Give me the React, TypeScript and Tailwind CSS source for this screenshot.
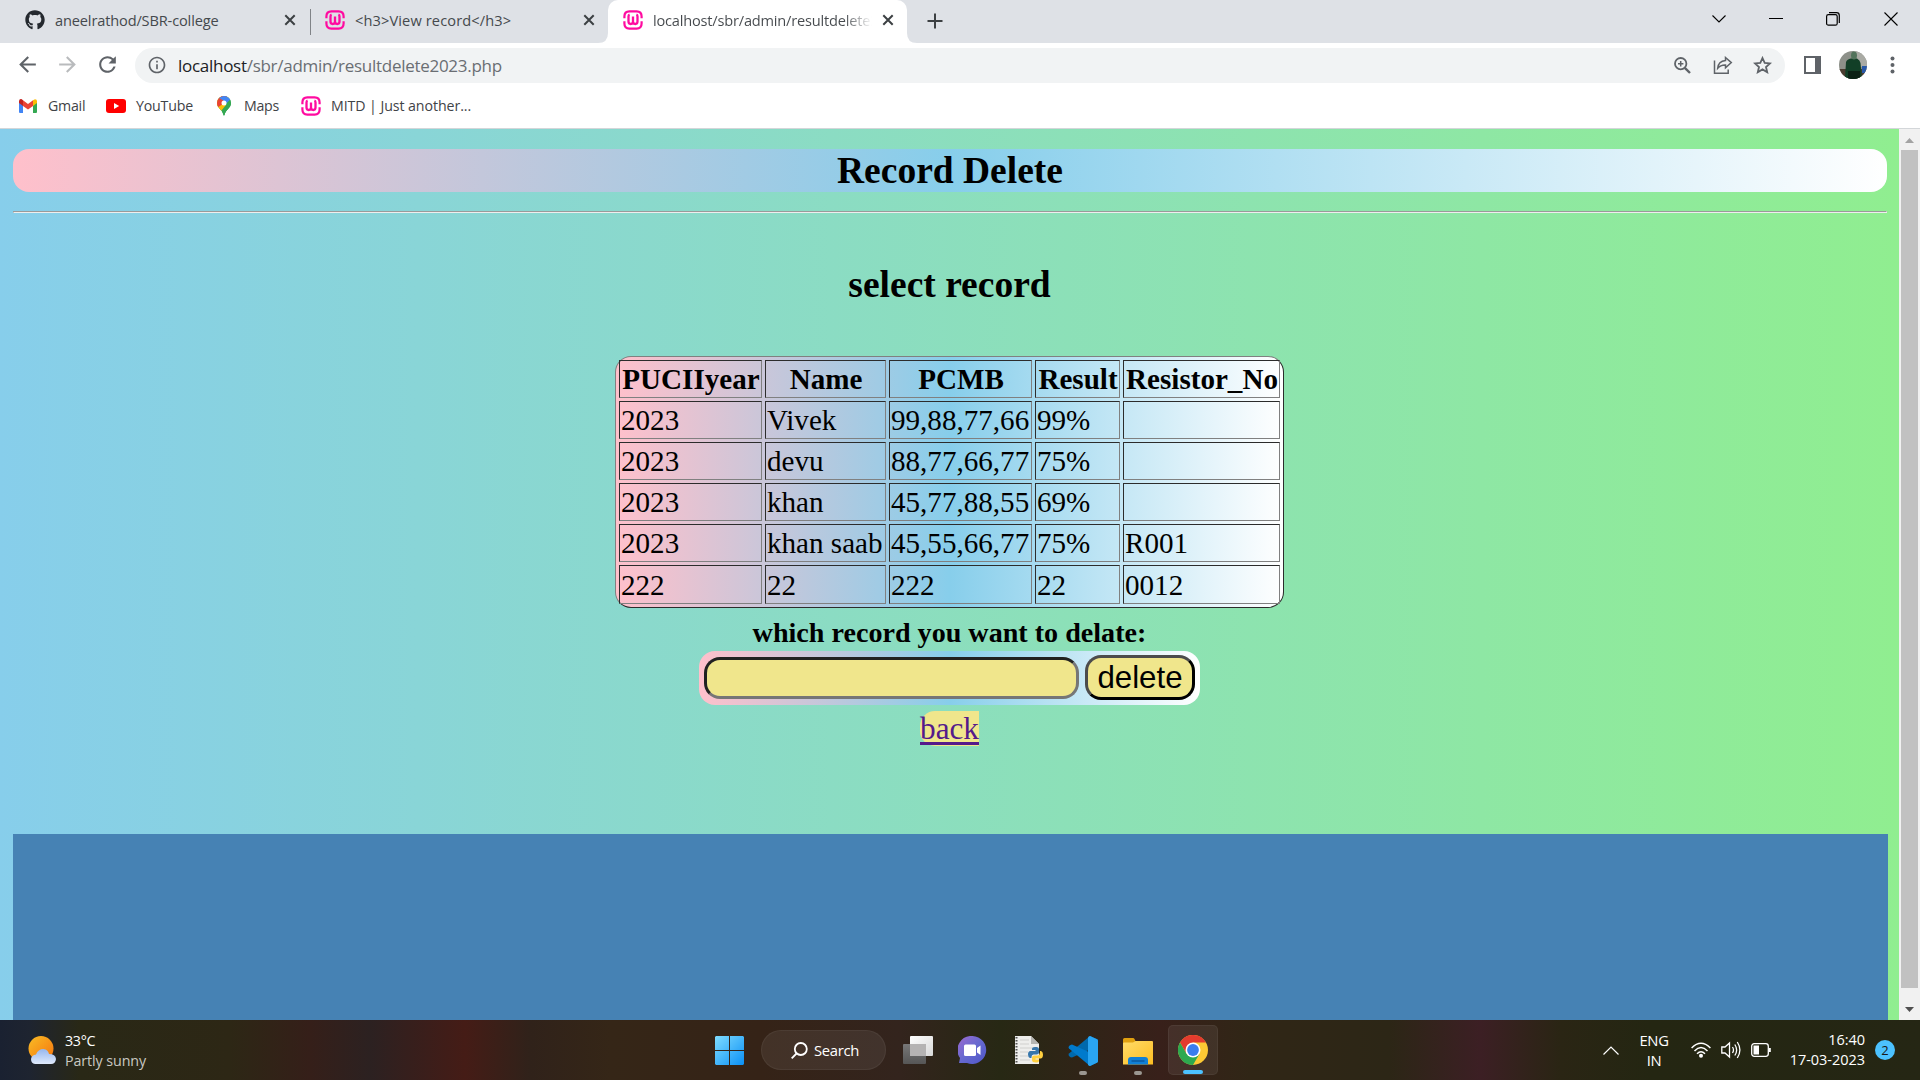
import React from "react";
import { FaGithub } from "react-icons/fa";
import { MdArrowBack, MdArrowForward, MdRefresh, MdInfoOutline } from "react-icons/md";

const UI = "font-['Open_Sans','Noto_Sans',sans-serif]";
const SERIF = "font-['Liberation_Serif',serif]";

function WampIcon() {
  return (
    <svg className="block shrink-0" width="20" height="20" viewBox="0 0 20 20" fill="none" stroke="#ff0ba0">
      <path d="M1.4 8.2V6.400Q1.400 1.400 6.400 1.400H13.600Q18.600 1.400 18.600 6.400V8.200M1.400 11.200V13.600Q1.400 18.600 6.400 18.600H13.600Q18.600 18.600 18.600 13.600V11.200" strokeWidth="2.2" />
      <path d="M6.6 4.600Q5.500 5 5.500 6.500V11.600Q5.500 14 7.700 14Q10 14 10 11.600V6.500M10 11.600Q10 14 12.300 14Q14.500 14 14.500 11.600V6.500Q14.500 5 13.400 4.600" strokeWidth="2.300" />
    </svg>
  );
}

function CloseX() {
  return (
    <svg className="block shrink-0" width="12" height="12" viewBox="0 0 12 12" stroke="#3c4043" strokeWidth="2">
      <path d="M1.3 1.3L10.7 10.7M10.7 1.3L1.3 10.7" />
    </svg>
  );
}

function TabStrip() {
  return (
    <div className={"flex h-[43px] bg-[#dee1e6] text-[14.6px] leading-[34px] text-[#45494d] " + UI}>
      <div className="flex h-[41px] w-[310px] items-center pb-px pl-[25px]">
        <FaGithub className="shrink-0 text-[#24292f]" size={20} />
        <span className="ml-2.5 w-[229px] whitespace-nowrap tracking-[-0.15px]">aneelrathod/SBR-college</span>
        <CloseX />
      </div>
      <div className="mt-[9px] h-[26px] w-px shrink-0 bg-[#808387]" />
      <div className="flex h-[41px] w-[297px] items-center pb-px pl-[14px]">
        <WampIcon />
        <span className="ml-2.5 w-[228px] whitespace-nowrap tracking-[0.12px]">&lt;h3&gt;View record&lt;/h3&gt;</span>
        <CloseX />
      </div>
      <svg className="-ml-2.5 mt-[33px] block shrink-0" width="10" height="10" viewBox="0 0 10 10" fill="#fff"><path d="M10 0V10H0Q10 10 10 0Z" /></svg>
      <div className="flex h-[43px] w-[299px] items-center rounded-t-[10px] bg-white pb-[3px] pl-[15px]">
        <WampIcon />
        <span className="ml-[10px] mr-[10px] w-[219px] overflow-hidden whitespace-nowrap bg-[linear-gradient(to_right,#45494d_87%,transparent_100%)] bg-clip-text tracking-[-0.2px] text-transparent">localhost/sbr/admin/resultdelete2</span>
        <CloseX />
      </div>
      <svg className="mt-[33px] block shrink-0" width="10" height="10" viewBox="0 0 10 10" fill="#fff"><path d="M0 0V10H10Q0 10 0 0Z" /></svg>
      <svg className="ml-[10px] mt-[13px] block shrink-0" width="16" height="16" viewBox="0 0 16 16" stroke="#3c4043" strokeWidth="2"><path d="M8 .5V15.5M.5 8H15.5" /></svg>
      <div className="ml-auto flex h-[37px] items-center pr-[22px] text-black">
        <svg width="14" height="8" viewBox="0 0 14 8" fill="none" stroke="currentColor" strokeWidth="1.1"><path d="M.5.5L7 7L13.5.5" /></svg>
        <svg className="ml-[43px]" width="14" height="2" viewBox="0 0 14 2"><path d="M0 .5H14" stroke="currentColor" /></svg>
        <svg className="ml-[43px]" width="14" height="14" viewBox="0 0 14 14" fill="none" stroke="currentColor" strokeWidth="1.2"><rect x=".6" y="2.6" width="10.6" height="10.6" rx="1.8" /><path d="M3 .7H10.5Q13.3.7 13.3 3.5V11" /></svg>
        <svg className="ml-[44px]" width="14" height="14" viewBox="0 0 14 14" stroke="currentColor" strokeWidth="1.1"><path d="M.5.5L13.5 13.5M13.5.5L.5 13.5" /></svg>
      </div>
    </div>
  );
}

function Toolbar() {
  return (
    <div className={"flex h-[43px] items-center bg-white pt-px text-[#5f6368] " + UI}>
      <MdArrowBack size={25} className="-mt-px ml-[15px]" />
      <MdArrowForward size={25} className="-mt-px ml-[15px] text-[#b9bbbd]" />
      <MdRefresh size={25} className="-mt-px ml-[15px]" />
      <div className="ml-[15px] flex h-[35px] w-[1650px] items-center rounded-full bg-[#f1f3f4] pl-[12px] pr-[13px]">
        <MdInfoOutline size={20} />
        <span className="ml-[11px] whitespace-nowrap pt-px text-[17px] tracking-[-0.28px] text-[#6a6e73]"><span className="text-[#202124]">localhost</span>/sbr/admin/resultdelete2023.php</span>
        <svg className="ml-auto" width="17" height="17" viewBox="0 0 17 17" fill="none" stroke="currentColor">
          <circle cx="6.700" cy="6.700" r="5.700" strokeWidth="1.800" />
          <path d="M10.800 10.800L16 16" strokeWidth="2.400" />
          <path d="M6.700 4V9.400M4 6.700H9.400" strokeWidth="1.500" />
        </svg>
        <svg className="ml-[22px]" width="20" height="19" viewBox="0 0 20 19" fill="none" stroke="currentColor" strokeWidth="1.5">
          <path d="M1.5 4.5V17.2H15.2V13.5" />
          <path d="M12.5 1.5L18.3 6.6L12.5 11.8V8.9Q7.5 8.7 4.7 12.2Q5.3 5.2 12.5 4.5Z" />
        </svg>
        <svg className="ml-[20px]" width="19" height="18" viewBox="0 0 19 18" fill="none" stroke="currentColor" strokeWidth="1.800">
          <path d="M9.500 2L11.700 6.900L17 7.400L13 11L14.200 16.200L9.500 13.400L4.800 16.200L6 11L2 7.400L7.300 6.900Z" />
        </svg>
      </div>
      <svg className="ml-[19px]" width="17" height="18" viewBox="0 0 17 18"><path d="M1 1H16V17H1Z" fill="#fff" stroke="#5f6368" strokeWidth="2" /><path d="M11 0H17V18H11Z" fill="#5f6368" /></svg>
      <svg className="ml-[18px]" width="28" height="28" viewBox="0 0 28 28">
        <defs><clipPath id="avatar"><circle cx="14" cy="14" r="14" /></clipPath></defs>
        <g clipPath="url(#avatar)">
          <path d="M0 0H28V28H0Z" fill="#8d9089" />
          <path d="M0 18H28V28H0Z" fill="#4a3c30" />
          <path d="M15 0H20L28 7V16H20Z" fill="#a9aaa4" />
          <path d="M23 15H28V22H23Z" fill="#2858a8" />
          <path d="M6 27L7 11Q8 8 12 7.5H18Q21 9 21.5 12L23 28H6Z" fill="#123f27" />
          <path d="M9 20H21V28H9Z" fill="#0b2115" />
          <ellipse cx="15" cy="4.5" rx="3" ry="4" fill="#52735b" />
        </g>
      </svg>
      <svg className="ml-[23px]" width="5" height="18" viewBox="0 0 5 18" fill="#5f6368"><circle cx="2.5" cy="2.5" r="2" /><circle cx="2.5" cy="9" r="2" /><circle cx="2.5" cy="15.5" r="2" /></svg>
    </div>
  );
}

function Bookmarks() {
  return (
    <div className={"flex h-[43px] items-center whitespace-nowrap border-b border-[#d3d6d9] bg-white pb-[2px] pl-[19px] text-[14.2px] text-[#3f4347] " + UI}>
      <svg width="18" height="14" viewBox="0 0 18 14">
        <path d="M0 2V13Q0 14 1 14H4V5Z" fill="#4285f4" />
        <path d="M18 2V13Q18 14 17 14H14V5Z" fill="#34a853" />
        <path d="M14 1.2L16 .2Q18 .3 18 2V4L14 7Z" fill="#fbbc04" />
        <path d="M4 1.2L9 5L14 1.2V7L9 10.6L4 7Z" fill="#ea4335" />
        <path d="M4 7L0 4V2Q.2-.2 2.4.1L4 1.2Z" fill="#c5221f" />
      </svg>
      <span className="ml-[11px] w-[58px] tracking-[-0.25px]">Gmail</span>
      <svg width="20" height="14" viewBox="0 0 20 14"><rect width="20" height="14" rx="3" fill="#f00" /><path d="M8 4L13.2 7L8 10Z" fill="#fff" /></svg>
      <span className="ml-[10px] w-[81px] tracking-[-0.2px]">YouTube</span>
      <svg width="14" height="20" viewBox="0 0 14 20">
        <defs><clipPath id="pin"><path d="M7 0A7 7 0 0 1 14 7C14 12 9 13 7.5 19Q7 20 6.5 19C5 13 0 12 0 7A7 7 0 0 1 7 0Z" /></clipPath></defs>
        <g clipPath="url(#pin)"><path d="M0 0H14V20H0Z" fill="#34a853" /><path d="M0 0H14L3 13L0 12Z" fill="#fbbc04" /><path d="M0 0H10L7 7L0 12Z" fill="#ea4335" /><path d="M2 2L9-2L14 3L7 10L7 5Z" fill="#4285f4" /><path d="M7 10L14 3V12L7 20H4Z" fill="#34a853" /><path d="M2 12L7 7L9 9L4 15Z" fill="#fbbc04" /></g>
        <circle cx="7" cy="7" r="2.5" fill="#fff" />
      </svg>
      <span className="ml-[13px] w-[57px] tracking-[-0.3px]">Maps</span>
      <WampIcon />
      <span className="ml-[10px] tracking-[-0.08px]">MITD | Just another...</span>
    </div>
  );
}

const HEADERS = ["PUCIIyear", "Name", "PCMB", "Result", "Resistor_No"];
const ROWS = [
  ["2023", "Vivek", "99,88,77,66", "99%", ""],
  ["2023", "devu", "88,77,66,77", "75%", ""],
  ["2023", "khan", "45,77,88,55", "69%", ""],
  ["2023", "khan saab", "45,55,66,77", "75%", "R001"],
  ["222", "22", "222", "22", "0012"],
];
const CELL = "whitespace-nowrap border border-b-[#808080] border-l-[#2c2c2c] border-r-[#808080] border-t-[#2c2c2c] pb-0 pl-px pr-0 pt-px leading-[33px]";

function RecordTable() {
  return (
    <table className="w-[669px] table-fixed border-separate border-spacing-[3px] rounded-[16px] border border-b-[#2c2c2c] border-l-[#808080] border-r-[#2c2c2c] border-t-[#808080] bg-[linear-gradient(to_right,pink,skyblue,white)] text-[29.1px]">
      <colgroup>
        <col className="w-[143px]" /><col className="w-[121px]" /><col className="w-[143px]" /><col className="w-[85px]" /><col className="w-[157px]" />
      </colgroup>
      <thead>
        <tr>{HEADERS.map((h) => <th key={h} className={CELL + " h-[38px] text-center font-bold"}>{h}</th>)}</tr>
      </thead>
      <tbody>
        {ROWS.map((row, i) => (
          <tr key={i}>
            {row.map((c, j) => <td key={j} className={CELL + (i === ROWS.length - 1 ? " h-[39px]" : " h-[38px]")}>{c}</td>)}
          </tr>
        ))}
      </tbody>
    </table>
  );
}

function Page() {
  return (
    <div className={"flex h-[891px] w-[1899px] flex-col items-center overflow-hidden bg-[linear-gradient(to_right,skyblue,lightgreen)] pl-px text-black " + SERIF}>
      <h1 className="mt-5 h-[43px] w-[1874px] shrink-0 rounded-[16px] bg-[linear-gradient(to_right,pink,skyblue,white)] text-center text-[37.5px] font-bold leading-[43px]">Record Delete</h1>
      <hr className="mt-[19px] h-[2px] w-[1874px] shrink-0 border border-b-[#eeeeee] border-l-[#9a9a9a] border-r-[#eeeeee] border-t-[#9a9a9a]" />
      <h1 className="mr-px mt-[50px] h-[43px] shrink-0 text-[37.5px] font-bold leading-[43px]">select record</h1>
      <div className="mr-px mt-[50px] h-[252px] shrink-0"><RecordTable /></div>
      <div className="mr-px mt-[8px] h-[35px] shrink-0 text-[28.125px] font-bold leading-[34px]">which record you want to delate:</div>
      <form className="mr-px flex h-[54px] w-[501px] shrink-0 rounded-[16px] bg-[linear-gradient(to_right,pink,skyblue,white)] pl-[5px]">
        <div className="mt-[6px] h-[42px] w-[375px] rounded-[16px] border-[3px] border-b-[#767676] border-l-[#212121] border-r-[#767676] border-t-[#212121] bg-[#f0e68c]" />
        <button type="button" className="ml-[6px] mt-[4px] h-[45px] w-[110px] rounded-[16px] border-[3px] border-b-black border-l-[#4c4c4c] border-r-black border-t-[#4c4c4c] bg-[#f0e68c] font-['Liberation_Sans',sans-serif] text-[31.25px] leading-[39px]">delete</button>
      </form>
      <a className="mr-px mt-[6px] h-[35px] shrink-0 rounded-l-[15px] bg-[#f0e68c] text-[31.25px] leading-[35px] text-[#551a8b] underline decoration-[3px] underline-offset-[3px]">back</a>
      <div className="mt-[88px] h-[186px] w-[1875px] shrink-0 bg-[#4682b4]" />
    </div>
  );
}

function Scrollbar() {
  return (
    <div className="flex h-[891px] w-[21px] flex-col items-center bg-[#f1f1f1]">
      <svg className="mt-[9px] block shrink-0" width="9" height="5" viewBox="0 0 9 5" fill="#a3a3a3"><path d="M4.5 0L9 5H0Z" /></svg>
      <div className="mt-[7px] h-[838px] w-[17px] shrink-0 bg-[#c1c1c1]" />
      <svg className="mt-[19px] block shrink-0" width="9" height="5" viewBox="0 0 9 5" fill="#505050"><path d="M0 0H9L4.5 5Z" /></svg>
    </div>
  );
}

function Taskbar() {
  return (
    <div className={"flex h-[60px] items-center bg-[linear-gradient(to_right,#1a2131_0px,#1e2430_30px,#292816_80px,#2d2715_230px,#351f19_310px,#2c2121_370px,#451c16_465px,#30221a_530px,#352617_610px,#352317_760px,#33241d_900px,#272814_1000px,#38201a_1160px,#302616_1250px,#2c2616_1390px,#3c1f24_1480px,#2a2514_1560px,#242612_1650px,#252614_1920px)] text-[14.3px] leading-5 text-white " + UI}>
      <div className="flex w-[715px] items-center pl-[28px]">
        <svg width="28" height="28" viewBox="0 0 28 28">
          <defs>
            <linearGradient id="sun" x1="0" y1="0" x2="1" y2="1"><stop stopColor="#f9bd25" /><stop offset="1" stopColor="#f5730e" /></linearGradient>
            <linearGradient id="cloud" x1="0" y1="0" x2="0" y2="1"><stop stopColor="#96b7ee" /><stop offset="1" stopColor="#dfeafc" /></linearGradient>
          </defs>
          <circle cx="13" cy="12.5" r="12.5" fill="url(#sun)" />
          <path d="M7 28Q3 27.500 3 23Q3.500 19 8 18.500Q10 13 15.500 13Q20 13.500 21 18Q27.500 18 28 23Q27.500 28 23 28Z" fill="url(#cloud)" />
        </svg>
        <div className="ml-[9px] whitespace-nowrap pt-[2px]"><div className="tracking-[-0.3px]">33°C</div><div className="tracking-[-0.1px] text-[#c9c8c3]">Partly sunny</div></div>
      </div>
      <svg className="shrink-0" width="29" height="29" viewBox="0 0 29 29">
        <defs><linearGradient id="win" x1="0" y1="0" x2="1" y2="1"><stop stopColor="#7fdcff" /><stop offset="1" stopColor="#0b90f5" /></linearGradient></defs>
        <path d="M1 0H14V14H0V1ZM15 0H28L29 1V14H15ZM0 15H14V29H1L0 28ZM15 15H29V28L28 29H15Z" fill="url(#win)" />
      </svg>
      <div className="ml-[17px] flex h-10 w-[125px] shrink-0 items-center rounded-full border border-white/5 bg-white/[0.07] pl-[29px]">
        <svg width="17" height="17" viewBox="0 0 17 17" fill="none" stroke="#fff" strokeWidth="1.8"><circle cx="9.800" cy="7" r="6" /><path d="M5.500 11.500L.7 16.300" /></svg>
        <span className="ml-[6px] text-[14.800px] tracking-[-0.3px]">Search</span>
      </div>
      <svg className="ml-[17px] shrink-0" width="30" height="28" viewBox="0 0 30 28">
        <defs>
          <linearGradient id="tv1" x1="0" y1="0" x2="1" y2="1"><stop stopColor="#fff" /><stop offset="1" stopColor="#d8d8d8" /></linearGradient>
          <linearGradient id="tv2" x1="0" y1="0" x2="0" y2="1"><stop stopColor="#777" /><stop offset="1" stopColor="#565656" /></linearGradient>
        </defs>
        <rect y="8" width="23" height="20" rx="1" fill="url(#tv2)" /><rect x="7" width="23" height="20" rx="1" fill="url(#tv1)" /><path d="M7 8H23V20H7Z" fill="#b5b3b3" />
      </svg>
      <svg className="ml-[25px] shrink-0" width="29" height="28" viewBox="0 0 29 28">
        <defs><linearGradient id="chat" x1="0" y1="0" x2="1" y2="1"><stop stopColor="#9d6ad0" /><stop offset=".5" stopColor="#6669d0" /><stop offset="1" stopColor="#4e55c8" /></linearGradient></defs>
        <path d="M14.500 0A14 14 0 1 1 9 27H1L2 22A14 14 0 0 1 14.500 0Z" fill="url(#chat)" /><rect x="6" y="8.500" width="12" height="11.500" rx="1.500" fill="#fff" /><path d="M19 12L22.500 9.500V19L19 16.500Z" fill="#fff" />
      </svg>
      <svg className="ml-[28px] shrink-0" width="28" height="29" viewBox="0 0 28 29">
        <path d="M0 0H16L24 8V28H0Z" fill="#eeeeec" /><path d="M16 0V8H24Z" fill="#b5b5b2" />
        <path d="M1.500 1V28" stroke="#555" strokeWidth="2" strokeDasharray="1.500 1.500" />
        <path d="M5 4H14M5 8H14M5 12H21M5 16H13M5 20H13M5 24H15" stroke="#d0d0ce" />
        <g transform="translate(13 11)">
          <path d="M7 0H8.500Q11 0 11 2.500V5.500Q11 7.500 8.500 7.500H5.500Q3.500 7.500 3.500 10V11H2Q0 10.500 0 7.500Q0 4 2.500 4H7.500V3H4V2Q4 0 7 0Z" fill="#3776ab" />
          <path d="M12 4H13Q15 4.500 15 7.500Q15 11 13 11.500H7.500V12.500H11V13.500Q11 15.500 8 15.500Q4 15.500 4 13V10.500Q4 8.500 6.500 8.500H9.500Q12 8 12 5.500Z" fill="#ffd040" />
        </g>
      </svg>
      <div className="ml-[25px] flex shrink-0 flex-col items-center pt-[10px]">
        <svg width="30" height="30" viewBox="0 0 30 30">
          <path d="M22 0L30 3.500V10L4 21.500Q2.500 21.500 1 20Q0 18.500 1 17.500Z" fill="#0069ad" />
          <path d="M22 30L30 26V20L4 8.500Q2.500 8.500 1 10Q0 11.500 1 12.500Z" fill="#007acc" />
          <path d="M22 0L29 3.200Q30 3.700 30 5V25Q30 26.300 29 26.800L22 30Q20.500 30 20 28.500V1.500Q20.500 0 22 0Z" fill="#2aa5f2" />
        </svg>
        <div className="mt-[5px] h-1 w-2 rounded-full bg-[#9b9791]" />
      </div>
      <div className="ml-[25px] flex shrink-0 flex-col items-center pt-[10px]">
        <svg className="mt-[2px]" width="30" height="28" viewBox="0 0 30 28">
          <defs><linearGradient id="fold" x1="0" y1="0" x2="1" y2="1"><stop stopColor="#ffdc69" /><stop offset="1" stopColor="#fdbd22" /></linearGradient></defs>
          <path d="M0 1.500Q0 0 1.500 0H10Q11 0 11.500 1L13 4H20V10H0Z" fill="#e0a010" /><path d="M0 5.500Q0 4.500 1 4.500H10L12.500 3H29Q30 3 30 4V26.500H0Z" fill="url(#fold)" />
          <path d="M5 26.500V22Q5 19 8 19H22Q25 19 25 22V26.500Z" fill="#1180d6" /><path d="M8.500 23H21.500" stroke="#0b4d91" strokeWidth="1.200" />
        </svg>
        <div className="mt-[5px] h-1 w-2 rounded-full bg-[#9b9791]" />
      </div>
      <div className="ml-[15px] flex h-[50px] w-[50px] shrink-0 flex-col items-center rounded-[5px] border border-white/5 bg-white/[0.07] pt-[9px]">
        <svg className="shrink-0" width="30" height="30" viewBox="0 0 30 30">
          <circle cx="15" cy="15" r="15" fill="#fcc934" />
          <path d="M2 7.500A15 15 0 0 1 28 7.500H15L8.500 18.800Z" fill="#e33b2e" />
          <path d="M2 7.500A15 15 0 0 0 15 30L21.500 18.800H8.500Z" fill="#2da94f" />
          <circle cx="15" cy="15" r="7.500" fill="#fff" /><circle cx="15" cy="15" r="5.900" fill="#3b7ded" />
        </svg>
        <div className="mt-[5px] h-1 w-5 shrink-0 rounded-full bg-[#4cc2ff]" />
      </div>
      <svg className="ml-auto" width="16" height="9" viewBox="0 0 16 9" fill="none" stroke="#fff" strokeWidth="1.200"><path d="M.5 8.500L8 1L15.500 8.500" /></svg>
      <div className="ml-[16px] w-[38px] text-center text-[14.800px] tracking-[-0.3px]"><div>ENG</div><div>IN</div></div>
      <svg className="ml-[18px]" width="20" height="16" viewBox="0 0 20 16" fill="none" stroke="#fff" strokeWidth="1.500"><path d="M.6 6Q10-3.400 19.400 6M3.500 9Q10 2.200 16.500 9M6 11.700Q10 7.700 14 11.700" /><circle cx="10" cy="13.700" r="2" fill="#fff" stroke="none" /></svg>
      <svg className="ml-[10px]" width="20" height="18" viewBox="0 0 20 18" fill="none" stroke="#fff" strokeWidth="1.300"><path d="M.8 6H4L8.500 2V16L4 12H.8ZM11.500 6Q13.500 9 11.500 12M13.800 3.500Q17.500 9 13.800 14.500M16.300 1Q21.500 9 16.300 17" /></svg>
      <svg className="ml-[10px]" width="20" height="14" viewBox="0 0 20 14" fill="none" stroke="#fff" strokeWidth="1.300"><rect x=".7" y=".7" width="16.600" height="12.600" rx="2.500" /><path d="M2.500 2.500H8V11.500H2.500ZM18 5H19.800V9H18Z" fill="#fff" stroke="none" /></svg>
      <div className="ml-[16px] w-[78px] whitespace-nowrap text-right text-[14.500px] tracking-[-0.03px]"><div>16:40</div><div>17-03-2023</div></div>
      <div className="ml-[10px] mr-[25px] flex h-5 w-5 shrink-0 items-center justify-center rounded-full bg-[#4cc2ff] text-[13px] text-[#1a1a1a]">2</div>
    </div>
  );
}

export default function App() {
  return (
    <div className="flex h-[1080px] w-[1920px] flex-col overflow-hidden">
      <TabStrip />
      <Toolbar />
      <Bookmarks />
      <div className="flex">
        <Page />
        <Scrollbar />
      </div>
      <Taskbar />
    </div>
  );
}
